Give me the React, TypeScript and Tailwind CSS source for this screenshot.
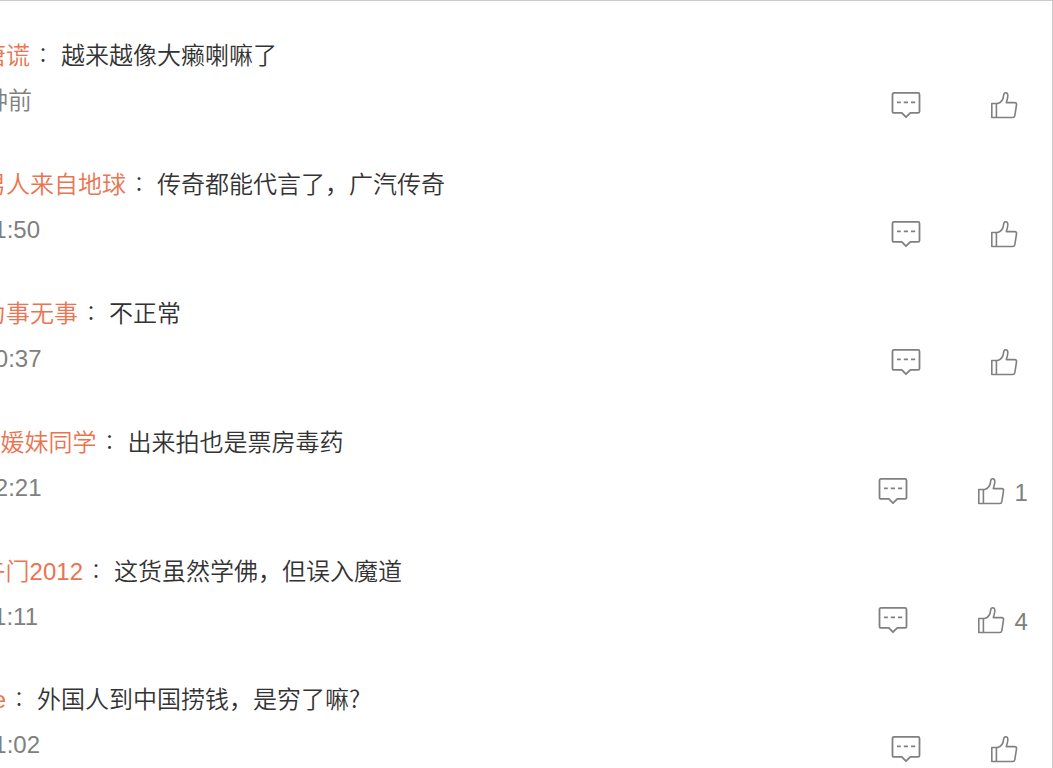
import React from 'react';

interface Comment {
  name: string;
  text: string;
  time: string;
  nameWidth: string;
  timeWidth: string;
  likes?: number;
}

const COMMENTS: Comment[] = [
  { name: '唐谎', text: '越来越像大癞喇嘛了', time: '分钟前', nameWidth: 'w-[30px]', timeWidth: 'w-[32px]' },
  { name: '男人来自地球', text: '传奇都能代言了，广汽传奇', time: '11:50', nameWidth: 'w-[126px]', timeWidth: 'w-[40px]' },
  { name: '为事无事', text: '不正常', time: '10:37', nameWidth: 'w-[78px]', timeWidth: 'w-[41.5px]' },
  { name: '媛妹同学', text: '出来拍也是票房毒药', time: '12:21', nameWidth: 'w-[96.5px]', timeWidth: 'w-[41.5px]', likes: 1 },
  { name: '午门2012', text: '这货虽然学佛，但误入魔道', time: '11:11', nameWidth: 'w-[83px]', timeWidth: 'w-[38px]', likes: 4 },
  { name: 'e', text: '外国人到中国捞钱，是穷了嘛?', time: '11:02', nameWidth: 'w-[6px]', timeWidth: 'w-[40px]' },
];

const ReplyIcon = () => (
  <svg className="h-7 w-[30px]" viewBox="0 0 30 28" fill="none" stroke="#808080" strokeWidth="1.8" strokeLinejoin="round">
    <path d="M3 1.9H27Q28.5 1.9 28.5 3.4V20.4Q28.5 21.9 27 21.9H19.3L15 26.2L10.8 21.9H3Q1.5 21.9 1.5 20.4V3.4Q1.5 1.9 3 1.9Z" />
    <path d="M6 11.4H9.8M12.8 11.4H17M20 11.4H24.2" />
  </svg>
);

const LikeIcon = () => (
  <svg className="h-7 w-7" viewBox="0 0 28 28" fill="none" stroke="#808080" strokeWidth="1.6" strokeLinejoin="round">
    <path d="M1.8 12.5H7.5C11.5 11.5 13.3 8.5 13.6 4.4C13.8 2.2 15 1.8 15.8 1.8C17.5 1.8 18 3.4 17.8 5.2C17.6 7.5 17 9.5 16.3 11.6H24.6C26.3 11.6 26.7 12.5 26.5 14L24.8 24.6C24.6 25.8 24.1 26.5 22.9 26.5H1.8Z" />
    <path d="M6.4 12.5V26.5" />
  </svg>
);

const CommentRow = ({ name, text, time, nameWidth, timeWidth, likes }: Comment) => (
  <div className="h-[128.8px] shrink-0">
    <div className="flex h-9 items-baseline leading-9 whitespace-nowrap text-[#333]">
      <div className={`flex shrink-0 justify-end overflow-hidden text-[#eb7350] ${nameWidth}`}>
        <span>{name}</span>
      </div>
      <span
        className="w-[31px] shrink-0 self-center pt-0.5 pl-[3px] font-['Noto_Sans_CJK_TC',sans-serif] text-xl leading-9"
        lang="zh-TW"
      >
        ：
      </span>
      <span className="font-['Noto_Sans_CJK_SC',sans-serif]">{text}</span>
    </div>
    <div className="mt-3.5 flex h-9 items-center justify-between pr-[25px] whitespace-nowrap text-[#808080]">
      <div className={`-mt-1.5 flex justify-end overflow-hidden ${timeWidth}`}>
        <span>{time}</span>
      </div>
      <div className="mt-px flex items-center">
        <ReplyIcon />
        <div className="ml-[69px] flex items-center">
          <LikeIcon />
          {likes ? <span className="mt-1 ml-2.5 w-[12.5px]">{likes}</span> : <span className="w-[9px]" />}
        </div>
      </div>
    </div>
  </div>
);

export default function App() {
  return (
    <div
      className="flex h-[768px] w-[1053px] flex-col overflow-hidden border-t border-r border-[#ccc] bg-white pt-[35.4px] font-['Liberation_Sans','Noto_Sans_CJK_SC',sans-serif] text-2xl font-[350]"
      lang="zh-CN"
    >
      {COMMENTS.map((comment) => (
        <CommentRow key={comment.name} {...comment} />
      ))}
    </div>
  );
}
